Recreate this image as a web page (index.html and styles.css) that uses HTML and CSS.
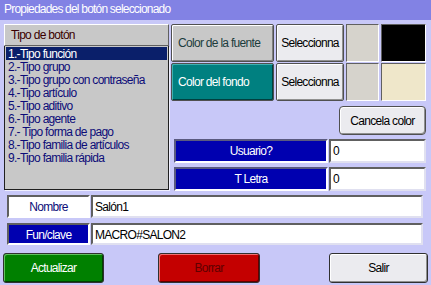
FILE: index.html
```html
<!DOCTYPE html>
<html lang="es">
<head>
    <meta charset="UTF-8">
    <title>Propiedades del botón seleccionado</title>
    <link rel="stylesheet" href="styles.css">
</head>
<body>
    <div class="window">
        <div class="titlebar">Propiedades del botón seleccionado</div>

        <div class="top">
            <div class="typebox">
                <div class="typebox-head">Tipo de botón</div>
                <ul class="type-list">
                    <li class="selected">1.-Tipo función</li>
                    <li>2.-Tipo grupo</li>
                    <li>3.-Tipo grupo con contraseña</li>
                    <li>4.-Tipo artículo</li>
                    <li>5.-Tipo aditivo</li>
                    <li>6.-Tipo agente</li>
                    <li>7.- Tipo forma de pago</li>
                    <li>8.-Tipo familia de artículos</li>
                    <li>9.-Tipo familia rápida</li>
                </ul>
            </div>

            <div class="props">
                <div class="colors">
                    <div class="color-label font-color">Color de la fuente</div>
                    <div class="pick">Seleccionna</div>
                    <div class="swatch swatch-gray"></div>
                    <div class="swatch swatch-black"></div>

                    <div class="color-label back-color">Color del fondo</div>
                    <div class="pick">Seleccionna</div>
                    <div class="swatch swatch-gray"></div>
                    <div class="swatch swatch-cream"></div>
                </div>

                <div class="cancel-row">
                    <div class="cancel">Cancela color</div>
                </div>

                <div class="field">
                    <div class="field-label">Usuario?</div>
                    <div class="field-value">0</div>
                </div>
                <div class="field">
                    <div class="field-label">T Letra</div>
                    <div class="field-value">0</div>
                </div>
            </div>
        </div>

        <div class="form">
            <div class="form-row">
                <div class="form-label name-label">Nombre</div>
                <div class="form-value">Salón1</div>
            </div>
            <div class="form-row key-row">
                <div class="form-label key-label">Fun/clave</div>
                <div class="form-value">MACRO#SALON2</div>
            </div>
        </div>

        <div class="actions">
            <div class="action btn-update">Actualizar</div>
            <div class="action btn-delete">Borrar</div>
            <div class="action btn-exit">Salir</div>
        </div>
    </div>
</body>
</html>
```

FILE: styles.css
```css
* {
    box-sizing: border-box;
}
body {
    margin: 0;
    width: 431px;
    height: 285px;
    overflow: hidden;
    background: #c8c8f8;
    font-family: "Liberation Sans", Arial, sans-serif;
    font-size: 12px;
    letter-spacing: -0.7px;
}
.window {
    display: flex;
    flex-direction: column;
    height: 285px;
}
.titlebar {
    height: 20px;
    line-height: 19px;
    padding-left: 4px;
    background: #8282e4;
    color: #fff;
    font-size: 12px;
    letter-spacing: -0.8px;
}

/* top area: type list + colour settings */
.top {
    display: flex;
    padding: 4px 0 0 4px;
    gap: 2px;
}
.typebox {
    width: 165px;
    height: 166px;
    display: flex;
    flex-direction: column;
}
.typebox-head {
    height: 22px;
    line-height: 20px;
    padding-left: 6px;
    background: #c8c8c8;
    color: #3a0000;
    border: 1px solid;
    border-color: #fff #606060 #606060 #fff;
}
.type-list {
    flex: 1;
    margin: 0;
    padding: 1px 1px 0 1px;
    list-style: none;
    background: #c8c8c8;
    border: 1px solid #202020;
    border-top: none;
    box-shadow: 1px 1px 0 #f0f0ff;
}
.type-list li {
    height: 13px;
    line-height: 14px;
    padding-left: 2px;
    color: #0c0c78;
}
.type-list li.selected {
    background: #0a1f6a;
    color: #fff;
}

.props {
    width: 256px;
    display: flex;
    flex-direction: column;
}
.colors {
    display: grid;
    grid-template-columns: 103px 68px 33px 45px;
    grid-template-rows: 38px 38px;
    column-gap: 2px;
    row-gap: 1px;
}
.color-label,
.pick,
.cancel,
.action {
    display: flex;
    align-items: center;
    justify-content: center;
    border: 1px solid #505050;
    border-radius: 2px;
}
.color-label {
    justify-content: flex-start;
    padding-left: 6px;
    box-shadow: inset 1px 1px 0 #fff, inset -1px -1px 0 #808080;
}
.font-color {
    background: #c8c8c8;
    color: #1c3c3c;
}
.back-color {
    background: #008080;
    color: #fff;
    box-shadow: inset 1px 1px 0 #40b0b0, inset -1px -1px 0 #004040;
}
.pick {
    background: #ebebef;
    color: #000;
    box-shadow: inset 1px 1px 0 #fff, inset -1px -1px 0 #909090;
}
.swatch {
    border: 1px solid;
    border-color: #606060 #fff #fff #606060;
}
.swatch-gray {
    background: #d6d3cc;
}
.swatch-black {
    background: #000;
}
.swatch-cream {
    background: #efe7ca;
}

.cancel-row {
    display: flex;
    justify-content: flex-end;
    padding-right: 1px;
    margin-top: 5px;
}
.cancel {
    width: 87px;
    height: 29px;
    background: #ebebef;
    border-radius: 4px;
    box-shadow: inset 1px 1px 0 #fff, inset -1px -1px 0 #909090;
}

.field {
    display: flex;
    gap: 1px;
    margin-top: 4px;
    padding-left: 3px;
    height: 24px;
}
.field-label {
    width: 154px;
    padding-top: 3px;
    text-align: center;
    background: #0000b0;
    color: #fff;
    border: 2px solid;
    border-color: #5a5a80 #fff #fff #5a5a80;
}
.field-value {
    width: 97px;
    padding: 3px 0 0 2px;
    background: #fff;
    border: 2px solid;
    border-color: #606060 #e0e0f0 #e0e0f0 #606060;
}

/* name / key rows */
.form {
    display: flex;
    flex-direction: column;
    gap: 5px;
    padding: 4px 8px 0 7px;
}
.form-row {
    display: flex;
    gap: 1px;
    height: 23px;
}
.key-row {
    height: 22px;
}
.form-label {
    width: 83px;
    padding-top: 3px;
    text-align: center;
    border: 2px solid;
    border-color: #606060 #fff #fff #606060;
}
.name-label {
    background: #fff;
    color: #0c0c78;
}
.key-label {
    background: #0000b0;
    color: #fff;
}
.form-value {
    flex: 1;
    padding: 3px 0 0 2px;
    background: #fff;
    border: 2px solid;
    border-color: #606060 #e0e0f0 #e0e0f0 #606060;
}

/* bottom buttons */
.actions {
    display: flex;
    padding: 8px 3px 0 3px;
}
.action {
    height: 30px;
    border-radius: 3px;
    border-color: #303030;
}
.btn-update {
    width: 101px;
    background: #008000;
    color: #fff;
    box-shadow: inset 1px 1px 0 #60c060, inset -1px -1px 0 #004000;
}
.btn-delete {
    width: 102px;
    margin-left: 54px;
    background: #c40000;
    color: #600000;
    box-shadow: inset 1px 1px 0 #f07070, inset -1px -1px 0 #600000;
}
.btn-exit {
    width: 99px;
    margin-left: auto;
    background: #ebebef;
    color: #000;
    box-shadow: inset 1px 1px 0 #fff, inset -1px -1px 0 #909090;
}
```
